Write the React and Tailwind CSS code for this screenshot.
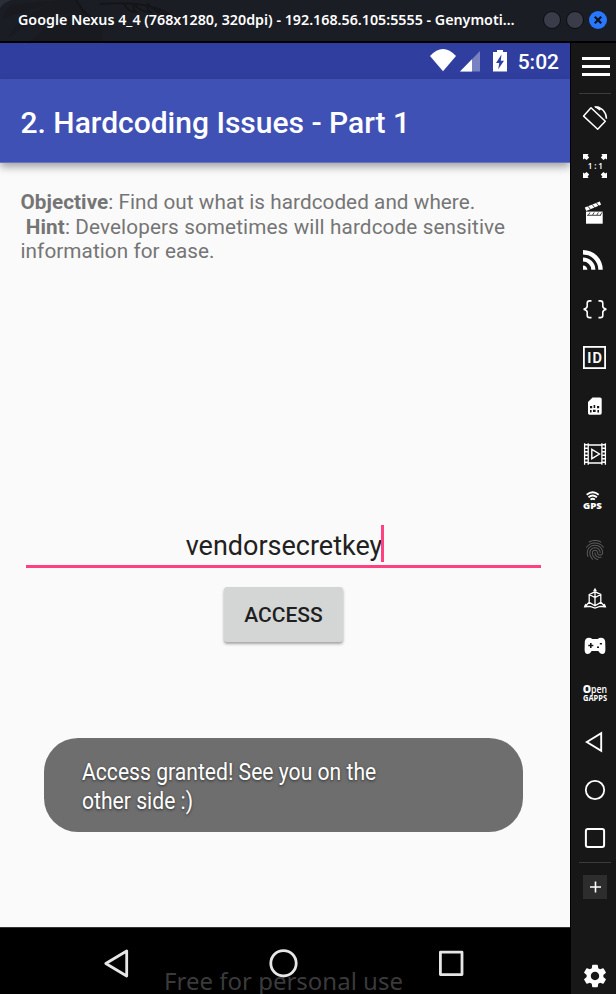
import React from "react";
import { MdFingerprint, MdSettings } from "react-icons/md";

function Slot({ children }) {
  return (
    <div className="flex h-12 w-full items-center justify-center">
      <svg width="28" height="28" viewBox="0 0 28 28" fill="none" stroke="none" className="block shrink-0">
        {children}
      </svg>
    </div>
  );
}

const corner = "M2 2h5.6l-1 1.4 1.6 2-2.6 2.6-2-1.6L2 7.6z";

function Sidebar() {
  return (
    <aside className="flex w-[46px] shrink-0 flex-col items-center border-l border-black bg-[#171717] pl-[3px] text-white">
      <div className="ml-0.5 flex h-[50px] w-7 flex-col justify-start gap-[5px] pt-[14px]">
        <div className="h-[3px] bg-white" />
        <div className="h-[3px] bg-white" />
        <div className="h-[3px] bg-white" />
      </div>
      <div className="h-px w-8 bg-[#3b3b3b]" />
      <Slot>
        <path d="M10 3.7 24.3 17.3 16.7 25.2 2.6 12.1z" stroke="white" strokeWidth="1.5" strokeLinejoin="round" />
        <path d="M14 2.9C20.5 3 25.3 8 25.5 14.8" stroke="white" strokeWidth="1.5" />
        <path d="M12.8 2.6 18 2.4 20.6 4.8 18.6 6.6z" fill="white" />
      </Slot>
      <Slot>
        <g fill="white">
          <path d={corner} />
          <path d={corner} transform="translate(28 0) scale(-1 1)" />
          <path d={corner} transform="translate(0 28) scale(1 -1)" />
          <path d={corner} transform="translate(28 28) scale(-1 -1)" />
          <text x="14.3" y="17" fontSize="8" fontWeight="600" textAnchor="middle" fontFamily="Noto Sans, sans-serif" textLength="15">1 : 1</text>
        </g>
      </Slot>
      <Slot>
        <path d="M5 11.6h16.7v12.1H5z" fill="white" />
        <path d="M3.8 7.6 18.8 1.6 20 4.8 5.2 11z" fill="white" />
        <path d="M7 6.2 9.4 9.4M11.2 4.4l2.4 3.2M15.4 2.8l2.4 3.2" stroke="#171717" strokeWidth=".8" />
        <path d="M9 12.4 7.4 15M13.2 12.4l-1.6 2.6M17.4 12.4l-1.6 2.6M21 12.4l-1.6 2.6M6 15.3h14" stroke="#171717" strokeWidth=".8" />
      </Slot>
      <Slot>
        <g fill="white">
          <path d="M2 17.4A4.4 4.4 0 0 1 6.4 21.8H2z" />
          <path d="M2 9.4A12.4 12.4 0 0 1 14.4 21.8H10.3A8.3 8.3 0 0 0 2 13.5z" />
          <path d="M2 2A19.8 19.8 0 0 1 21.8 21.8H17.3A15.3 15.3 0 0 0 2 6.5z" />
        </g>
      </Slot>
      <Slot>
        <path d="M10.5 4.9H8.6Q6.2 4.9 6.2 7.2V10.2Q6.2 12.4 2.6 13.2Q6.2 14 6.2 16.2V19.2Q6.2 21.6 8.6 21.6H10.5M17.5 4.9H19.4Q21.8 4.9 21.8 7.2V10.2Q21.8 12.4 25.4 13.2Q21.8 14 21.8 16.2V19.2Q21.8 21.6 19.4 21.6H17.5" stroke="white" strokeWidth="1.6" />
      </Slot>
      <Slot>
        <rect x="2.9" y="2.9" width="21.2" height="21.2" stroke="white" strokeWidth="1.8" />
        <text x="13.6" y="18.9" fontSize="14.4" fontWeight="500" textAnchor="middle" fill="white" stroke="white" strokeWidth=".2" fontFamily="Roboto, sans-serif" textLength="14.5">ID</text>
      </Slot>
      <Slot>
        <path d="M11.5 5.4H19Q20.7 5.4 20.7 7V21Q20.7 22.7 19 22.7H8.6Q7 22.7 7 21V10z" fill="white" />
        <path d="M9 14h2.2v2.2H9zM12.6 13h1.6v3h-1.6zM16 14h2.2v2.2H16zM9 18h1.6v2.4H9zM12 17.8h2.6v2.2H12zM16.4 18H18v2.4h-1.6z" fill="#171717" />
      </Slot>
      <Slot>
        <path d="M3.6 3.2v21.6M7.2 3.2v21.6M20.9 3.2v21.6M24.4 3.2v21.6M7 5h14M7 23h14" stroke="white" strokeWidth="1.3" />
        <path d="M5.4 4v20M22.6 4v20" stroke="white" strokeWidth="3" strokeDasharray="1.4 2.1" />
        <path d="M10.8 9.3 18.5 14l-7.7 4.7z" stroke="white" strokeWidth="1.4" />
      </Slot>
      <Slot>
        <path d="M5.7 6.8Q11.7 1.8 17.7 6.8M7.5 9.3Q11.7 5.8 15.9 9.3M9.5 11.6Q11.7 9.8 13.9 11.6" stroke="white" strokeWidth="1.8" />
        <text x="2" y="21" fontSize="8.8" fontWeight="800" fill="white" fontFamily="Open Sans, sans-serif" textLength="19" lengthAdjust="spacingAndGlyphs">GPS</text>
      </Slot>
      <div className="flex h-12 w-full items-center justify-center">
        <MdFingerprint className="size-6 text-[#5c5c5c]" />
      </div>
      <Slot>
        <path d="M14 6v8.5M8.2 18.3 4.5 22M19.8 18.3 23.5 22M8.2 10.5 14 7.8l5.8 2.7v7.8L14 21.8l-5.8-3.5zM8.2 10.5 14 13.6l5.8-3.1M14 13.6v8M3.5 22.5H9L14 24l5-1.5h5.5" stroke="white" strokeWidth="1.3" />
        <path d="M14 3.8l2 3.4h-4zM2.7 23.4l1.6-3.8 2.6 3.4zM25.3 23.4l-1.6-3.8-2.6 3.4z" fill="white" />
      </Slot>
      <Slot>
        <path d="M8 5.7Q10 5.7 11.3 7H16.7Q18 5.7 20 5.7Q23.8 5.7 24.2 9.5L24.4 17.5Q24.4 22 21.3 22Q19.4 22 18 20L17.4 19H10.6L10 20Q8.6 22 6.7 22Q3.6 22 3.6 17.5L3.8 9.5Q4.2 5.7 8 5.7z" fill="white" />
        <path d="M9.8 11v5M7.3 13.5h5M16 15.2h2M18.8 11.8h2.2" stroke="#171717" strokeWidth="1.6" />
      </Slot>
      <Slot>
        <g fill="white" fontFamily="Open Sans, sans-serif">
          <text x="1.7" y="13.3" fontSize="10.5" fontWeight="800">O</text>
          <text x="10" y="13.3" fontSize="10.5" fontWeight="600" textLength="16" lengthAdjust="spacingAndGlyphs">pen</text>
          <text x="2" y="21.2" fontSize="8" fontWeight="700" textLength="24" lengthAdjust="spacingAndGlyphs">GAPPS</text>
        </g>
      </Slot>
      <Slot>
        <path d="M5.8 14 20.2 5.2V22.8z" stroke="white" strokeWidth="1.9" />
      </Slot>
      <Slot>
        <circle cx="14" cy="14" r="9.2" stroke="white" strokeWidth="1.8" />
      </Slot>
      <Slot>
        <rect x="4.9" y="4.9" width="18.2" height="18.2" rx="2" stroke="white" strokeWidth="2" />
      </Slot>
      <div className="h-px w-8 bg-[#3b3b3b]" />
      <div className="mt-3 flex size-6 items-center justify-center bg-[#2d2d2d]">
        <svg width="12" height="12" viewBox="0 0 12 12"><path d="M6.5 .5v11M1 6h11" stroke="white" strokeWidth="1.6" /></svg>
      </div>
      <MdSettings className="mt-[63px] size-7 shrink-0" />
    </aside>
  );
}

function TitleBar() {
  return (
    <header className="relative flex h-[43px] shrink-0 items-center justify-between border-b-2 border-black bg-[#1b1d24] pr-[9px] pl-[18px]">
      <svg width="200" height="41" viewBox="0 0 200 41" className="absolute top-0 left-0" fill="none">
        <path d="M0 8Q4 2 12 0H0z" fill="#2b2e36" />
        <path d="M12 5Q50 0 76 0Q84 12 98 22Q104 30 102 41H30Q50 22 78 12Q40 14 8 38Q20 14 50 6Q26 8 2 20Q4 10 12 5z" fill="#191a20" />
        <path d="M76 0Q84 14 96 22M124 4Q128 12 136 12Q132 8 134 4Q140 12 150 12Q146 8 148 4Q156 14 172 16Q150 0 100 4" stroke="#141519" strokeWidth="2" />
      </svg>
      <div className="relative -mt-0.5 font-['Noto_Sans',sans-serif] text-[14.28px] font-semibold whitespace-nowrap text-white">
        Google Nexus 4_4 (768x1280, 320dpi) - 192.168.56.105:5555 - Genymoti…
      </div>
      <div className="-mt-px flex gap-[5px]">
        <div className="size-[18px] rounded-full border border-[#0c0d10] bg-[#3b3c4a]" />
        <div className="size-[18px] rounded-full border border-[#0c0d10] bg-[#3b3c4a]" />
        <div className="flex size-[18px] items-center justify-center rounded-full bg-[#2777ff]">
          <svg width="8" height="8" viewBox="0 0 8 8"><path d="M.8.8l6.4 6.4M7.2.8.8 7.2" stroke="#111319" strokeWidth="2.2" /></svg>
        </div>
      </div>
    </header>
  );
}

function StatusBar() {
  return (
    <div className="flex h-9 shrink-0 items-center justify-end bg-[#303f9f] pr-[11px] text-white">
      <svg width="80" height="36" viewBox="0 0 80 36" className="mr-[8px]">
        <path d="M0 11.5Q13-3.5 26 11.5L13 28z" transform="translate(0 2.2) scale(1 .93)" fill="white" />
        <path d="M50 8v20.5H30z" fill="white" fillOpacity=".35" />
        <path d="M42 16.2V28.5H30z" fill="white" />
        <path d="M67 7h6v2h4v19.6H63V9h4z" fill="white" />
        <path d="M71.5 11.5 66 20h3.2l-1 6.2 5.8-8.4h-3.2z" fill="#303f9f" />
      </svg>
      <span className="pt-0.5 text-[21px] leading-9 font-medium">5:02</span>
    </div>
  );
}

export default function App() {
  return (
    <div className="flex h-[994px] w-[616px] flex-col overflow-hidden bg-black font-[Roboto,sans-serif]">
      <TitleBar />
      <div className="flex min-h-0 flex-1">
        <main className="flex w-[570px] shrink-0 flex-col bg-[#fafafa]">
          <StatusBar />
          <div className="flex h-[84px] shrink-0 items-center border-b border-[#6674c2] bg-[#3f51b5] pt-[4px] pl-[20.5px] shadow-[0_4px_8px_rgba(0,0,0,0.35)]">
            <h1 className="text-[30px] leading-9 font-medium whitespace-nowrap text-white">2. Hardcoding Issues - Part 1</h1>
          </div>
          <div className="mt-[27px] ml-[20.5px] h-[73px] text-[20.7px] leading-[24.5px] whitespace-pre text-[#757575]">
            <p className="tracking-[0.06px]"><b>Objective</b>: Find out what is hardcoded and where.</p>
            <p className="tracking-[0.12px]">{" "}<b>Hint</b>: Developers sometimes will hardcode sensitive</p>
            <p className="tracking-[0.08px]">information for ease.</p>
          </div>
          <div className="mt-[262px] ml-[26px] flex h-[43px] w-[515px] justify-center border-b-3 border-[#ff4081]">
            <span className="ml-[3px] pt-px text-[27px] leading-[40px] text-[#212121]">vendorsecretkey</span>
            <div className="-ml-px h-[37px] w-[3px] bg-[#ff4081]" />
          </div>
          <button className="mt-[19px] ml-[224px] h-[55px] w-[119px] rounded-[3px] bg-[#d4d6d5] pt-[3px] text-[21px] font-medium text-[#1f1f1f] shadow-[0_2px_3px_rgba(0,0,0,0.35)]">ACCESS</button>
          <div className="mt-[96px] ml-[44px] h-[94px] w-[479px] rounded-[34px] bg-[#6e6e6e] pt-5 pl-[38px]">
            <p className="origin-left scale-x-[0.88] text-[24px] leading-[28.6px] whitespace-pre text-white [text-shadow:0_1px_3px_rgba(0,0,0,0.6)]">{"Access granted! See you on the\nother side :)"}</p>
          </div>
          <nav className="relative mt-auto h-[67px] shrink-0 border-t border-[#333] bg-black">
            <svg width="570" height="66" viewBox="0 0 570 66" fill="none" stroke="#e6e6e6" strokeWidth="2.8" strokeLinejoin="round">
              <path d="M105.8 35.5 126.7 23V48z" />
              <circle cx="283.5" cy="35.3" r="12.7" />
              <rect x="440.4" y="24.2" width="21.6" height="22.4" />
            </svg>
            <div className="absolute top-[39px] left-[164px] font-['Noto_Sans',sans-serif] text-[24px] leading-7 whitespace-nowrap text-[#4b4b4b]/80">Free for personal use</div>
          </nav>
        </main>
        <Sidebar />
      </div>
    </div>
  );
}
